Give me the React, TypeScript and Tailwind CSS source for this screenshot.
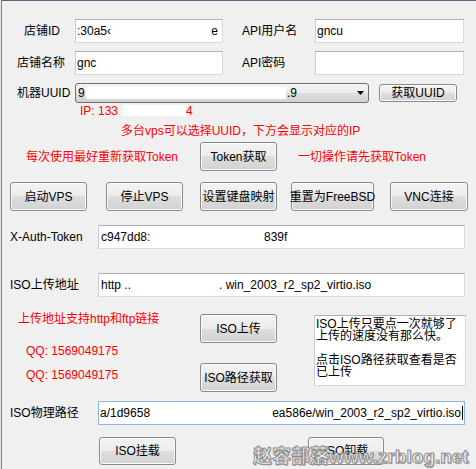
import React from 'react'

const btn =
  'flex shrink-0 items-center justify-center whitespace-nowrap rounded-[3px] border border-[#8a8a8a] bg-[linear-gradient(#f3f3f3_0%,#ececec_50%,#dedede_50%,#d2d2d2_100%)] shadow-[inset_0_0_0_1px_#fbfbfb] text-[12px] leading-none text-black'

const box =
  'flex shrink-0 items-center whitespace-nowrap bg-white border border-[#d6d9de] border-t-[#adb0b6] border-l-[#c9ccd1] px-[1px] text-[12px] leading-none'

function Label({ w, children }: { w: string; children: React.ReactNode }) {
  return <div className={`shrink-0 whitespace-nowrap ${w}`}>{children}</div>
}

export default function App() {
  return (
    <div className="flex w-[476px] h-[469px] overflow-hidden bg-[#f0f0f0] text-[12px] leading-none text-black font-['Liberation_Sans','Noto_Sans_CJK_SC',sans-serif] relative">
      {/* window frame edge */}
      <div className="w-[2px] shrink-0 border-r border-[#6f8399] bg-[#e6e6e6]" />

      <div className="flex flex-1 flex-col">
        <div className="h-px bg-[#55687b]" />

        {/* 店铺ID / API用户名 */}
        <div className="mt-[18px] flex h-[24px] items-center pl-[22px]">
          <Label w="w-[51px]">店铺ID</Label>
          <div className={`${box} w-[148px] h-full justify-between pr-[4px]`}>
            <span>:30a5‹</span>
            <span>e</span>
          </div>
          <div className="ml-[19px]" />
          <Label w="w-[73px]">API用户名</Label>
          <div className={`${box} w-[149px] h-full`}>
            <span>gncu</span>
          </div>
        </div>

        {/* 店铺名称 / API密码 */}
        <div className="mt-[8px] flex h-[24px] items-center pl-[15px]">
          <Label w="w-[58px]">店铺名称</Label>
          <div className={`${box} w-[148px] h-full`}>
            <span>gnc</span>
          </div>
          <div className="ml-[19px]" />
          <Label w="w-[73px]">API密码</Label>
          <div className={`${box} w-[149px] h-full`} />
        </div>

        {/* 机器UUID */}
        <div className="mt-[8px] flex h-[20px] items-center pl-[15px]">
          <Label w="w-[58px]">机器UUID</Label>
          <div className="flex h-full w-[294px] shrink-0 items-center rounded-[3px] border border-[#707070] bg-[linear-gradient(#f3f3f3_0%,#ececec_50%,#dedede_50%,#d2d2d2_100%)] pl-[2px] pr-[4px]">
            <span className="w-[8px]">9</span>
            <span className="h-[12px] w-[200px] bg-white" />
            <span className="ml-[1px]">.9</span>
            <svg className="ml-auto" width="7" height="4" viewBox="0 0 7 4">
              <path d="M0 0h7L3.5 4z" fill="#000" />
            </svg>
          </div>
          <div className={`${btn} ml-[10px] h-[18px] w-[78px]`}>获取UUID</div>
        </div>

        {/* IP */}
        <div className="mt-[1px] flex h-[13px] items-center pl-[78px] text-[#ff0000]">
          <span className="w-[43px] shrink-0 whitespace-nowrap">IP: 133</span>
          <span className="h-[11px] w-[63px] shrink-0 bg-white" />
          <span>4</span>
        </div>

        <div className="mt-[7px] flex h-[13px] items-center whitespace-nowrap pl-[119px] text-[#ff0000]">
          多台vps可以选择UUID，下方会显示对应的IP
        </div>

        {/* Token */}
        <div className="mt-[5px] flex h-[29px] items-center pl-[24px]">
          <div className="w-[174px] shrink-0 whitespace-nowrap text-[#ff0000]">每次使用最好重新获取Token</div>
          <div className={`${btn} h-full w-[77px]`}>Token获取</div>
          <div className="ml-[21px] whitespace-nowrap text-[#ff0000]">一切操作请先获取Token</div>
        </div>

        {/* action buttons */}
        <div className="mt-[11px] flex h-[29px] items-center pl-[8px]">
          <div className={`${btn} h-full w-[77px]`}>启动VPS</div>
          <div className={`${btn} ml-[19px] h-full w-[77px]`}>停止VPS</div>
          <div className={`${btn} ml-[17px] h-full w-[77px]`}>设置键盘映射</div>
          <div className={`${btn} ml-[14px] h-full w-[83px]`}>重置为FreeBSD</div>
          <div className={`${btn} ml-[16px] h-full w-[78px]`}>VNC连接</div>
        </div>

        {/* X-Auth-Token */}
        <div className="mt-[14px] flex h-[24px] items-center pl-[8px]">
          <Label w="w-[88px]">X-Auth-Token</Label>
          <div className={`${box} h-full w-[367px]`}>
            <span className="w-[164px] shrink-0 pl-[1px]">c947dd8:</span>
            <span>839f</span>
          </div>
        </div>

        {/* ISO上传地址 */}
        <div className="mt-[24px] flex h-[24px] items-center pl-[8px]">
          <Label w="w-[88px]">ISO上传地址</Label>
          <div className={`${box} h-full w-[367px]`}>
            <span className="w-[119px] shrink-0 pl-[1px]">http ..</span>
            <span>. win_2003_r2_sp2_virtio.iso</span>
          </div>
        </div>

        {/* upload block */}
        <div className="mt-[15px] flex h-[80px]">
          <div className="flex w-[198px] shrink-0 flex-col whitespace-nowrap text-[#ff0000]">
            <div className="mt-[1px] h-[12px] pl-[16px]">上传地址支持http和ftp链接</div>
            <div className="mt-[20px] h-[12px] pl-[24px]">QQ: 1569049175</div>
            <div className="mt-[12px] h-[12px] pl-[24px]">QQ: 1569049175</div>
          </div>
          <div className="flex w-[77px] shrink-0 flex-col">
            <div className={`${btn} mt-[2px] h-[29px] w-[77px]`}>ISO上传</div>
            <div className={`${btn} mt-[20px] h-[29px] w-[77px]`}>ISO路径获取</div>
          </div>
          <div className="ml-[37px] mt-[3px] h-[71px] w-[152px] shrink-0 border border-[#d6d9de] border-t-[#adb0b6] border-l-[#c9ccd1] bg-white pl-[1px] pt-[2px] text-[12px] leading-[12px]">
            <div>ISO上传只要点一次就够了</div>
            <div>上传的速度没有那么快。</div>
            <div className="h-[12px]" />
            <div>点击ISO路径获取查看是否</div>
            <div>已上传</div>
          </div>
        </div>

        {/* ISO物理路径 */}
        <div className="mt-[9px] flex h-[24px] items-center pl-[8px]">
          <Label w="w-[88px]">ISO物理路径</Label>
          <div className="flex h-full w-[367px] shrink-0 items-center justify-between whitespace-nowrap border border-[#8fb6dd] bg-white pl-[1px] pr-[1px]">
            <span>a/1d9658</span>
            <span className="flex items-center">
              ea586e/win_2003_r2_sp2_virtio.iso
              <span className="ml-px h-[14px] w-px bg-black" />
            </span>
          </div>
        </div>

        {/* mount buttons */}
        <div className="mt-[12px] flex h-[28px] items-center pl-[97px]">
          <div className={`${btn} h-full w-[77px]`}>ISO挂载</div>
          <div className={`${btn} ml-[132px] h-full w-[76px]`}>ISO卸载</div>
        </div>
      </div>

      {/* watermark */}
      <div className="absolute left-[253px] top-[447px] whitespace-nowrap text-[19px] font-bold leading-none text-[#f6f6f6] [-webkit-text-stroke:1px_#8e8e8e] [text-shadow:1px_1px_1px_#a8a8a8]">
        赵容部落www.zrblog.net
      </div>
    </div>
  )
}
